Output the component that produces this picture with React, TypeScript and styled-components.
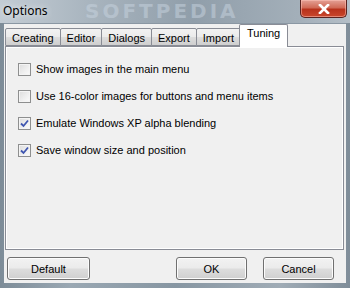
import React from 'react';
import styled, {createGlobalStyle} from 'styled-components';

const GlobalStyle = createGlobalStyle`
  html, body {
    margin: 0;
    padding: 0;
    width: 350px;
    height: 288px;
    overflow: hidden;
  }
  body {
    font-family: "Liberation Sans", Arial, sans-serif;
    font-size: 11px;
    color: #000;
  }
`

type OptionItem = {
    label: string,
    checked: boolean
}

const tabs = ['Creating', 'Editor', 'Dialogs', 'Export', 'Import', 'Tuning'];

const options: OptionItem[] = [
    {label: 'Show images in the main menu', checked: false},
    {label: 'Use 16-color images for buttons and menu items', checked: false},
    {label: 'Emulate Windows XP alpha blending', checked: true},
    {label: 'Save window size and position', checked: true},
];

const CheckBox = ({checked}: { checked: boolean }) => (
    <Box>
        {checked && (
            <svg width="9" height="9" viewBox="0 0 9 9">
                <path d="M1 4.5 L3.5 7 L8 1.5" fill="none" stroke="#3f56b0" strokeWidth="1.8"/>
            </svg>
        )}
    </Box>
);

export default function App() {
    return (
        <>
            <GlobalStyle/>
            <Window>
                <TitleBar>
                    <Title>Options</Title>
                    <Watermark>SOFTPEDIA</Watermark>
                    <CloseButton>
                        <svg width="12" height="10" viewBox="0 0 12 10">
                            <path d="M2 1 L10 9 M10 1 L2 9" stroke="#fff" strokeWidth="2.6" strokeLinecap="square"/>
                        </svg>
                    </CloseButton>
                </TitleBar>
                <Client>
                    <TabStrip>
                        {tabs.map(t => (
                            <Tab key={t} $active={t === 'Tuning'}>{t}</Tab>
                        ))}
                    </TabStrip>
                    <Panel>
                        {options.map(o => (
                            <OptionRow key={o.label}>
                                <CheckBox checked={o.checked}/>
                                <span>{o.label}</span>
                            </OptionRow>
                        ))}
                    </Panel>
                    <ButtonRow>
                        <Button $width={83}>Default</Button>
                        <Spacer/>
                        <Button $width={71}>OK</Button>
                        <Button $width={71}>Cancel</Button>
                    </ButtonRow>
                </Client>
            </Window>
        </>
    );
}

const Window = styled.div`
  width: 350px;
  height: 288px;
  display: flex;
  flex-direction: column;
  background: linear-gradient(90deg, #7d8c98 0%, #9aa8b3 20%, #8796a2 50%, #a0acb6 80%, #7f8d99 100%);
  padding: 0 4px 5px 4px;
  box-sizing: border-box;
`

const TitleBar = styled.div`
  height: 23px;
  display: flex;
  align-items: flex-start;
  margin: 0 -4px;
  padding-left: 3px;
  background: linear-gradient(90deg, #c3ccd4 0%, #a9b5bf 25%, #909eaa 55%, #a3afb9 85%, #b4bec7 100%);
`

const Title = styled.div`
  font-family: "Noto Sans", "Open Sans", sans-serif;
  font-size: 12px;
  line-height: 20px;
  margin-top: 1px;
  color: #000;
  text-shadow: 0 0 6px rgba(255, 255, 255, 0.9);
`

const Watermark = styled.div`
  flex: 1;
  text-align: center;
  font-family: "DejaVu Sans", sans-serif;
  font-weight: bold;
  font-size: 20px;
  line-height: 22px;
  letter-spacing: 3px;
  white-space: nowrap;
  color: rgba(200, 212, 224, 0.5);
  padding-right: 24px;
`

const CloseButton = styled.div`
  width: 47px;
  height: 18px;
  margin-right: 3px;
  box-sizing: border-box;
  display: flex;
  align-items: center;
  justify-content: center;
  border: 1px solid #5a2320;
  border-top: none;
  border-radius: 0 0 5px 5px;
  background: linear-gradient(180deg, #e4a196 0%, #d06a57 45%, #b8321c 55%, #c9472c 100%);
  box-shadow: inset 0 0 0 1px rgba(255, 200, 190, 0.5);
`

const Client = styled.div`
  flex: 1;
  display: flex;
  flex-direction: column;
  background: #f0f0f0;
  border-top: 1px solid #8a97a3;
  padding: 0 1px 0 1px;
`

const TabStrip = styled.div`
  height: 22px;
  display: flex;
  align-items: flex-end;
  position: relative;
  z-index: 1;
`

const Tab = styled.div<{ $active: boolean }>`
  box-sizing: border-box;
  height: ${p => p.$active ? '23px' : '18px'};
  margin-bottom: ${p => p.$active ? '-1px' : '0'};
  padding: ${p => p.$active ? '1px 7px 0' : '2px 6px 0'};
  margin-left: ${p => p.$active ? '-1px' : '0'};
  margin-right: ${p => p.$active ? '0' : '-1px'};
  border: 1px solid #898c95;
  border-bottom: ${p => p.$active ? 'none' : '1px solid #898c95'};
  border-radius: 2px 2px 0 0;
  background: ${p => p.$active ? '#fff' : 'linear-gradient(180deg, #f2f2f2 0%, #ebebeb 50%, #dddddd 51%, #cfcfcf 100%)'};
  font-size: 11px;
  line-height: 14px;
  white-space: nowrap;
`

const Panel = styled.div`
  height: 204px;
  margin-right: 1px;
  box-sizing: border-box;
  border: 1px solid #898c95;
  box-shadow: inset 1px 1px 0 #fff, inset -1px -1px 0 #fff;
  background: #f0f0f0;
  display: flex;
  flex-direction: column;
  gap: 13px;
  padding: 15px 0 0 12px;
`

const OptionRow = styled.div`
  display: flex;
  align-items: center;
  gap: 5px;
  height: 14px;
  font-size: 11px;
`

const Box = styled.div`
  width: 13px;
  height: 13px;
  box-sizing: border-box;
  border: 1px solid #8e8f8f;
  background: linear-gradient(135deg, #dcdcdc 0%, #f0f0f0 60%, #fbfbfb 100%);
  box-shadow: inset 0 0 0 1px #f4f4f4;
  display: flex;
  align-items: center;
  justify-content: center;
`

const ButtonRow = styled.div`
  display: flex;
  align-items: center;
  gap: 16px;
  padding: 7px 11px 0 2px;
`

const Spacer = styled.div`
  flex: 1;
`

const Button = styled.div<{ $width: number }>`
  width: ${p => p.$width}px;
  height: 23px;
  box-sizing: border-box;
  border: 1px solid #707070;
  border-radius: 3px;
  background: linear-gradient(180deg, #f2f2f2 0%, #ebebeb 48%, #dddddd 52%, #cfcfcf 100%);
  box-shadow: inset 0 0 0 1px #fcfcfc;
  display: flex;
  align-items: center;
  justify-content: center;
  font-size: 11px;
`
